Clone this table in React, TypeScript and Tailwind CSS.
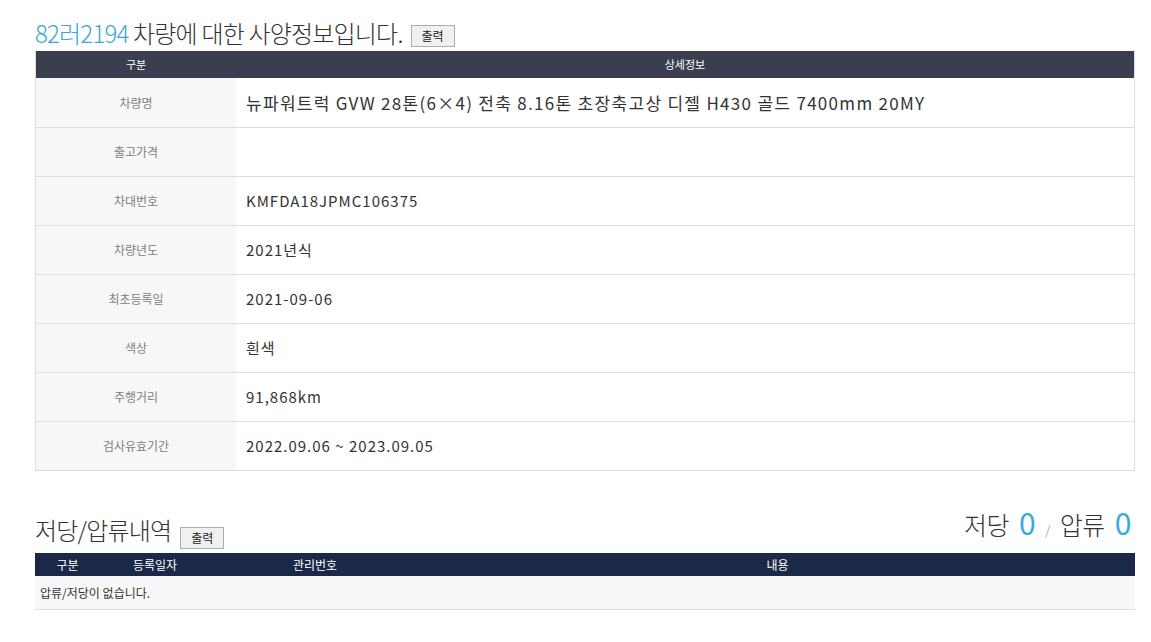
export default function App() {
  const specs = [
    { label: "차량명", value: "뉴파워트럭 GVW 28톤(6×4) 전축 8.16톤 초장축고상 디젤 H430 골드 7400mm 20MY", big: true },
    { label: "출고가격", value: "" },
    { label: "차대번호", value: "KMFDA18JPMC106375" },
    { label: "차량년도", value: "2021년식" },
    { label: "최초등록일", value: "2021-09-06" },
    { label: "색상", value: "흰색" },
    { label: "주행거리", value: "91,868km" },
    { label: "검사유효기간", value: "2022.09.06 ~ 2023.09.05" },
  ];

  return (
    <div className="w-[1151px] h-[642px] bg-white text-[#333] font-['Noto_Sans_CJK_KR','Noto_Sans',sans-serif]">
      <div className="w-[1100px] ml-[35px] pt-[12px]">
        {/* Spec title */}
        <div className="flex items-end h-[36px]">
          <h1 className="text-[24px] leading-[30px] tracking-[-0.8px] font-light">
            <span className="text-[#3aa5d8]">82러2194</span> 차량에 대한 사양정보입니다.
          </h1>
          <button className="ml-[8px] mb-[1px] w-[44px] h-[22px] bg-[#f0f0f0] border border-[#adadad] text-[12px] leading-none text-[#222]">
            출력
          </button>
        </div>

        {/* Spec table */}
        <div className="mt-[3px] border-x border-b border-[#dddddd]">
          <div className="flex h-[27px] bg-[#3a3e4e] text-white text-[11px] items-center">
            <div className="w-[200px] text-center">구분</div>
            <div className="flex-1 text-center">상세정보</div>
          </div>
          {specs.map((s, i) => (
            <div key={s.label} className={`flex h-[49px] ${i > 0 ? "border-t border-[#dddddd]" : ""}`}>
              <div className="w-[200px] bg-[#f7f7f7] flex items-center justify-center text-[12px] text-[#808080]">
                {s.label}
              </div>
              <div
                className={`flex-1 flex items-center pl-[10px] text-[#333] ${
                  s.big ? "text-[17px] tracking-[1.3px]" : "text-[15px] tracking-[1px]"
                }`}
              >
                {s.value}
              </div>
            </div>
          ))}
        </div>

        {/* Lien title */}
        <div className="mt-[38px] flex items-end justify-between h-[36px]">
          <div className="flex items-end">
            <h2 className="text-[24px] leading-[30px] tracking-[-0.8px] font-light">저당/압류내역</h2>
            <button className="ml-[9px] mb-[-4px] w-[44px] h-[22px] bg-[#f0f0f0] border border-[#adadad] text-[12px] leading-none text-[#222]">
              출력
            </button>
          </div>
          <div className="flex items-baseline text-[25px] leading-[30px] tracking-[-0.5px] font-light mr-[4px]">
            <span>저당</span>
            <span className="ml-[10px] text-[30px] font-normal text-[#36a9dd]">0</span>
            <span className="mx-[10px] text-[13px] text-[#888]">/</span>
            <span>압류</span>
            <span className="ml-[10px] text-[30px] font-normal text-[#36a9dd]">0</span>
          </div>
        </div>

        {/* Lien table */}
        <div className="mt-[8px]">
          <div className="flex h-[23px] bg-[#1b2847] text-white text-[12px] items-center">
            <div className="w-[65px] text-center">구분</div>
            <div className="w-[110px] text-center">등록일자</div>
            <div className="w-[210px] text-center">관리번호</div>
            <div className="flex-1 text-center">내용</div>
          </div>
          <div className="h-[34px] bg-[#f8f8f8] border-b border-[#dddddd] flex items-center pl-[5px] text-[12px] text-[#333]">
            압류/저당이 없습니다.
          </div>
        </div>
      </div>
    </div>
  );
}
